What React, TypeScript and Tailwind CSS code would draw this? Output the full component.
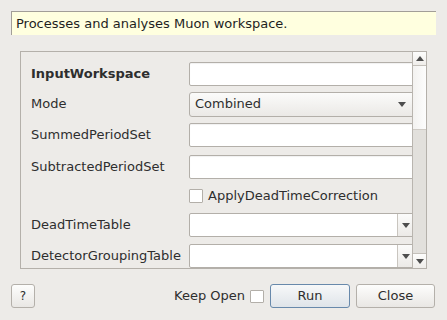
const font = "font-['DejaVu_Sans',sans-serif]";

function Arrow({ up = false }: { up?: boolean }) {
    return (
        <svg width="8" height="5" viewBox="0 0 8 5" className="block">
            <path d={up ? "M0 5 L4 0 L8 5 Z" : "M0 0 L8 0 L4 5 Z"} fill="#4d4d4d" />
        </svg>
    );
}

function TextField() {
    return <div className="h-[24px] -mr-[6px] flex-1 bg-white border border-[#b3afa9] rounded-[2px] shadow-[inset_0_1px_1px_rgba(0,0,0,0.06)]" />;
}

function EditCombo() {
    return (
        <div className="h-[24px] -mr-[6px] flex-1 flex bg-white border border-[#b3afa9] rounded-[2px]">
            <div className="flex-1" />
            <div className="w-[20px] border-l border-[#c9c5bf] bg-gradient-to-b from-[#fbfbfa] to-[#eceae7] flex items-center pl-[4px]">
                <Arrow />
            </div>
        </div>
    );
}

function Row({ label, bold = false, children }: { label: string; bold?: boolean; children: React.ReactNode }) {
    return (
        <div className="flex items-center h-[24px]">
            <div className={`w-[158px] text-[13px] text-[#2e2e2e] ${bold ? "font-bold" : ""}`}>{label}</div>
            {children}
        </div>
    );
}

export default function App() {
    return (
        <div className={`w-[447px] h-[320px] bg-[#edebe8] flex flex-col pt-[11px] px-[11px] ${font} overflow-hidden`}>
            <div className="h-[24px] w-[425px] bg-[#ffffdf] border-t border-l border-[#a29e98] flex items-center pl-[4px] text-[13px] text-[#1e1e1e]">
                Processes and analyses Muon workspace.
            </div>

            <div className="mt-[16px] ml-[9px] w-[407px] h-[218px] border border-[#b4b0aa] flex">
                <div className="flex-1 overflow-hidden pl-[10px] pt-[10px] flex flex-col">
                    <Row label="InputWorkspace" bold>
                        <TextField />
                    </Row>
                    <div className="mt-[6px]">
                        <Row label="Mode">
                            <div className="h-[25px] -mr-[6px] flex-1 flex items-center justify-between pl-[5px] pr-[11px] border border-[#b3afa9] rounded-[3px] bg-gradient-to-b from-[#fbfbfa] to-[#ebe9e6] text-[13px] text-[#2e2e2e]">
                                <span>Combined</span>
                                <Arrow />
                            </div>
                        </Row>
                    </div>
                    <div className="mt-[7px]">
                        <Row label="SummedPeriodSet">
                            <TextField />
                        </Row>
                    </div>
                    <div className="mt-[8px]">
                        <Row label="SubtractedPeriodSet">
                            <TextField />
                        </Row>
                    </div>
                    <div className="mt-[6px] h-[24px] flex items-center pl-[158px]">
                        <div className="w-[14px] h-[14px] bg-white border border-[#b3afa9] rounded-[1px]" />
                        <span className="ml-[5px] text-[13px] text-[#2e2e2e]">ApplyDeadTimeCorrection</span>
                    </div>
                    <div className="mt-[7px]">
                        <Row label="DeadTimeTable">
                            <EditCombo />
                        </Row>
                    </div>
                    <div className="mt-[7px]">
                        <Row label="DetectorGroupingTable">
                            <EditCombo />
                        </Row>
                    </div>
                </div>

                <div className="w-[14px] border-l border-[#b9b5af] bg-[#e2e0dc] flex flex-col">
                    <div className="h-[14px] bg-gradient-to-b from-[#fdfdfc] to-[#efedea] border-b border-[#c4c0ba] flex items-center justify-center">
                        <Arrow up />
                    </div>
                    <div className="h-[64px] bg-gradient-to-r from-[#f3f2f0] to-[#fdfdfd] border-b border-[#cfcbc5]" />
                    <div className="flex-1" />
                    <div className="h-[15px] bg-gradient-to-b from-[#fdfdfc] to-[#efedea] border-t border-[#c4c0ba] flex items-center justify-center">
                        <Arrow />
                    </div>
                </div>
            </div>

            <div className="mt-[15px] h-[24px] flex items-center">
                <button className="w-[24px] h-[24px] rounded-[3px] border border-[#b4b0aa] bg-gradient-to-b from-[#fdfdfc] to-[#e9e7e4] text-[12px] text-[#2e2e2e] flex items-center justify-center">
                    ?
                </button>
                <div className="flex-1" />
                <span className="text-[13px] text-[#2e2e2e]">Keep Open</span>
                <div className="ml-[5px] w-[14px] h-[13px] bg-white border border-[#b3afa9] rounded-[1px]" />
                <button className="ml-[6px] w-[80px] h-[24px] rounded-[3px] border border-[#6889ab] bg-gradient-to-b from-[#f7f8f9] to-[#dfe4e9] text-[13px] text-[#2e2e2e]">
                    Run
                </button>
                <button className="ml-[6px] mr-[1px] w-[79px] h-[24px] rounded-[3px] border border-[#b4b0aa] bg-gradient-to-b from-[#fdfdfc] to-[#e9e7e4] text-[13px] text-[#2e2e2e]">
                    Close
                </button>
            </div>
        </div>
    );
}
